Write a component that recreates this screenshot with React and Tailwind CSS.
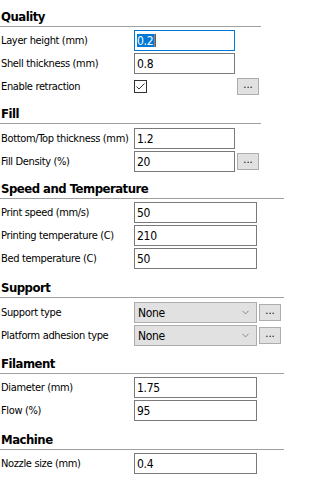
import { ChevronDown } from 'lucide-react';

const font = "font-['DejaVu_Sans_Condensed','DejaVu_Sans',sans-serif]";

const sections = [
  {
    title: 'Quality',
    wide: false,
    head: 'h-[27px]',
    pad: 'pt-[3px]',
    rows: [
      { label: 'Layer height (mm)', type: 'input', value: '0.2', focused: true },
      { label: 'Shell thickness (mm)', type: 'input', value: '0.8' },
      { label: 'Enable retraction', type: 'check', more: true },
    ],
  },
  {
    title: 'Fill',
    wide: false,
    head: 'h-[27px]',
    pad: 'pt-[4px]',
    rows: [
      { label: 'Bottom/Top thickness (mm)', type: 'input', value: '1.2' },
      { label: 'Fill Density (%)', type: 'input', value: '20', more: true },
    ],
  },
  {
    title: 'Speed and Temperature',
    wide: true,
    head: 'h-[27px]',
    pad: 'pt-[3px]',
    rows: [
      { label: 'Print speed (mm/s)', type: 'input', value: '50' },
      { label: 'Printing temperature (C)', type: 'input', value: '210' },
      { label: 'Bed temperature (C)', type: 'input', value: '50' },
    ],
  },
  {
    title: 'Support',
    wide: true,
    head: 'h-[29px]',
    pad: 'pt-[4px]',
    rows: [
      { label: 'Support type', type: 'select', value: 'None', more: true },
      { label: 'Platform adhesion type', type: 'select', value: 'None', more: true },
    ],
  },
  {
    title: 'Filament',
    wide: true,
    head: 'h-[28px]',
    pad: 'pt-[3px]',
    rows: [
      { label: 'Diameter (mm)', type: 'input', value: '1.75' },
      { label: 'Flow (%)', type: 'input', value: '95' },
    ],
  },
  {
    title: 'Machine',
    wide: true,
    head: 'h-[29px]',
    pad: 'pt-[3px]',
    rows: [{ label: 'Nozzle size (mm)', type: 'input', value: '0.4' }],
  },
];

const MoreButton = () => (
  <button className="ml-[2px] flex h-[17px] w-[22px] shrink-0 items-center justify-center border border-[#adadad] bg-[#e1e1e1] pb-[4px] text-[11px] leading-none text-black">
    ...
  </button>
);

const Control = ({ row, wide }) => {
  const width = wide ? 'w-[123px]' : 'w-[101px]';

  if (row.type === 'check') {
    return (
      <div className={`${width} flex shrink-0 items-center`}>
        <div className="flex h-[13px] w-[13px] items-center justify-center border border-[#333333] bg-white">
          <svg width="11" height="11" viewBox="0 0 11 11">
            <path d="M1.5 5.5 L4 8 L9.5 2.5" fill="none" stroke="#333" strokeWidth="1" />
          </svg>
        </div>
      </div>
    );
  }

  if (row.type === 'select') {
    return (
      <div className={`${width} flex h-[21px] shrink-0 items-center justify-between border border-[#adadad] bg-[#e1e1e1] pl-[3px] pr-[5px] text-[12px] tracking-[-0.3px] text-black`}>
        <span>{row.value}</span>
        <ChevronDown size={11} strokeWidth={1.5} className="text-[#606060]" />
      </div>
    );
  }

  return (
    <div
      className={`${width} flex h-[21px] shrink-0 items-center border ${row.focused ? 'border-[#0078d7]' : 'border-[#7a7a7a]'} bg-white pl-[2px] text-[12px] tracking-[-0.3px] text-black`}
    >
      {row.focused ? (
        <span className="flex h-[13px] items-center bg-[#0078d7] pr-[1px] text-white">
          {row.value}
          <span className="ml-[1px] h-[13px] w-[1px] bg-[#e07020]" />
        </span>
      ) : (
        <span>{row.value}</span>
      )}
    </div>
  );
};

export default function App() {
  return (
    <div className={`h-[482px] w-[314px] bg-white ${font} text-black`}>
      {sections.map((s) => (
        <div key={s.title} className={s.wide ? 'w-[284px]' : 'w-[261px]'}>
          <div className={`${s.head} flex items-end border-b border-[#a0a0a0] pb-[1px] pl-[1px] text-[13px] font-bold leading-[17px] tracking-[-0.5px]`}>
            {s.title}
          </div>
          <div className={`flex flex-col gap-[2px] ${s.pad}`}>
            {s.rows.map((r) => (
              <div key={r.label} className="flex h-[21px] items-center">
                <div className="w-[134px] shrink-0 whitespace-nowrap pl-[1px] text-[11px] leading-none tracking-[-0.35px]">
                  {r.label}
                </div>
                <Control row={r} wide={s.wide} />
                {r.more && <MoreButton />}
              </div>
            ))}
          </div>
        </div>
      ))}
    </div>
  );
}
